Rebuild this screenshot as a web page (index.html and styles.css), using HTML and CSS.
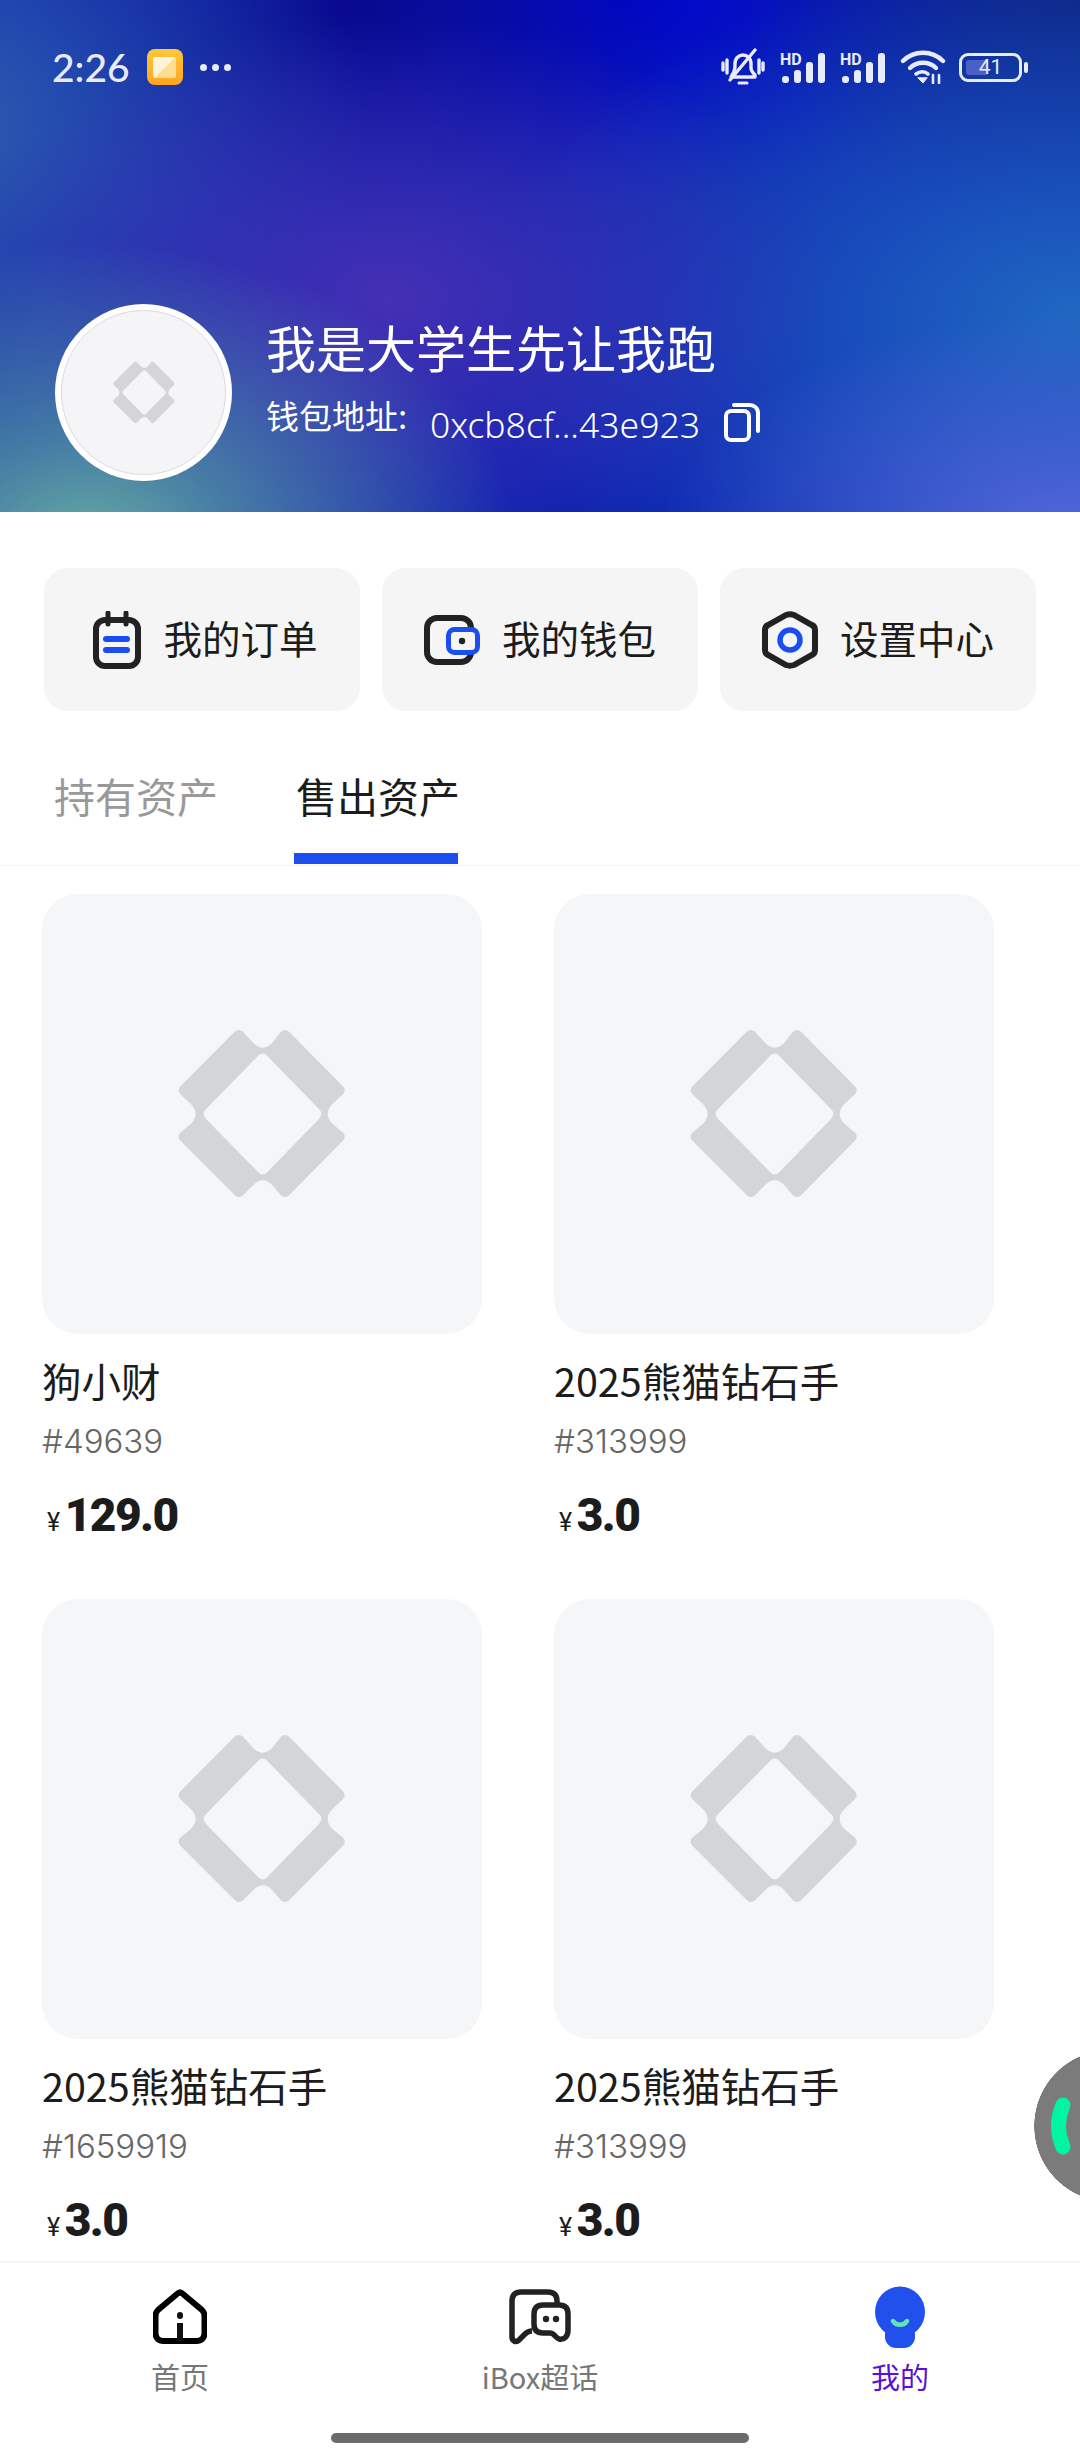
FILE: index.html
```html
<!DOCTYPE html>
<html lang="zh-CN">
<head>
    <meta charset="UTF-8">
    <meta name="viewport" content="width=device-width, initial-scale=1.0">
    <title>我的</title>
    <link rel="stylesheet" href="styles.css">
</head>
<body>
    <svg class="defs" width="0" height="0">
        <symbol id="logoMark" viewBox="80 80 512 520">
            <path fill-rule="evenodd" d="M255 97Q268 87 280 97L308 128Q338 160 368 128L392 97Q404 87 416 97L575 258Q586 270 575 282L545 310Q515 340 545 370L575 395Q586 407 575 419L416 580Q404 590 392 580L368 552Q338 520 308 552L280 580Q268 590 256 580L95 419Q84 407 95 395L125 370Q155 340 125 310L95 282Q84 270 95 258ZM325 168Q338 155 351 168L505 326Q518 340 505 354L351 512Q338 525 325 512L170 354Q157 340 170 326Z"/>
        </symbol>
    </svg>

    <header class="hero">
        <div class="statusBar">
            <div class="statusLeft">
                <span class="clock">2:26</span>
                <span class="appIcon"><span class="appIconInner"></span></span>
                <span class="dots"><i></i><i></i><i></i></span>
            </div>
            <div class="statusRight">
                <svg class="bell" width="44" height="38" viewBox="0 0 44 38" fill="none" stroke="#e8ebfa" stroke-width="3.4" stroke-linecap="round" stroke-linejoin="round">
                    <path d="M11 27c3-3 3-6 3-11 0-6 4-9 8-9s8 3 8 9v4c0 3 2 5 4 7v2H10"/>
                    <path d="M34 2 9 32"/>
                    <path d="M2 15v7M6 12v13M38 12v13M42 15v7"/>
                    <path d="M18 35h8" stroke-width="3"/>
                </svg>
                <svg class="signal" width="50" height="36" viewBox="0 0 50 36" fill="#e8ebfa">
                    <text x="0" y="16" class="hdText">HD</text>
                    <rect x="2" y="27" width="7" height="7" rx="3"/>
                    <rect x="14" y="21" width="7" height="13" rx="3"/>
                    <rect x="26" y="13" width="7" height="21" rx="3"/>
                    <rect x="38" y="4" width="7" height="30" rx="3"/>
                </svg>
                <svg class="signal" width="50" height="36" viewBox="0 0 50 36" fill="#e8ebfa">
                    <text x="0" y="16" class="hdText">HD</text>
                    <rect x="2" y="27" width="7" height="7" rx="3"/>
                    <rect x="14" y="21" width="7" height="13" rx="3"/>
                    <rect x="26" y="13" width="7" height="21" rx="3"/>
                    <rect x="38" y="4" width="7" height="30" rx="3"/>
                </svg>
                <svg width="46" height="34" viewBox="0 0 46 34" fill="none" stroke="#e8ebfa" stroke-width="4.4" stroke-linecap="round">
                    <path d="M3 11C14 0 32 0 43 11"/>
                    <path d="M10 18c7-7 19-7 26 0"/>
                    <path d="M16 24c4-3 9-3 12 0" stroke-width="3.6"/>
                    <path d="m18 28 5 5 4-5z" fill="#e8ebfa" stroke-width="1"/>
                    <path d="M33 25v8M39 25v8" stroke-width="2.6"/>
                </svg>
                <div class="battery">
                    <div class="batteryBody">
                        <div class="batteryFill"></div>
                        <span class="batteryText">41</span>
                    </div>
                    <div class="batteryNub"></div>
                </div>
            </div>
        </div>

        <div class="profile">
            <div class="avatar">
                <div class="avatarInner">
                    <svg class="avatarLogo"><use href="#logoMark"/></svg>
                </div>
            </div>
            <div class="profileInfo">
                <div class="userName">我是大学生先让我跑</div>
                <div class="walletRow">
                    <span class="walletLabel">钱包地址:</span>
                    <span class="walletAddress">0xcb8cf...43e923</span>
                    <svg class="copyIcon" width="36" height="40" viewBox="0 0 36 40" fill="none" stroke="#fff" stroke-width="4" stroke-linejoin="round" stroke-linecap="round">
                        <rect x="2" y="9" width="23" height="29" rx="5"/>
                        <path d="M10 3h16c4 0 8 3 8 8v18"/>
                    </svg>
                </div>
            </div>
        </div>
    </header>

    <nav class="shortcuts">
        <div class="shortcut">
            <svg width="48" height="58" viewBox="0 0 48 58" fill="none">
                <rect x="3" y="9" width="42" height="46" rx="9" stroke="#222" stroke-width="6"/>
                <path d="M15 2v11M33 2v11" stroke="#222" stroke-width="5" stroke-linecap="round"/>
                <rect x="10" y="25" width="27" height="6" rx="3" fill="#1b4ef0"/>
                <rect x="10" y="36" width="27" height="6" rx="3" fill="#1b4ef0"/>
            </svg>
            <span>我的订单</span>
        </div>
        <div class="shortcut">
            <svg width="56" height="50" viewBox="0 0 56 50" fill="none">
                <rect x="3" y="3" width="44" height="44" rx="10" stroke="#222" stroke-width="6"/>
                <rect x="24.500" y="14.500" width="29" height="23" rx="6" fill="#f5f5f5" stroke="#1b4ef0" stroke-width="5"/>
                <circle cx="38" cy="26" r="3.200" fill="#222"/>
            </svg>
            <span>我的钱包</span>
        </div>
        <div class="shortcut">
            <svg width="56" height="58" viewBox="0 0 56 58" fill="none">
                <path d="M24 4 6 14c-2 1-3 3-3 5v20c0 2 1 4 3 5l18 10c3 1 5 1 8 0l18-10c2-1 3-3 3-5V19c0-2-1-4-3-5L32 4c-3-1-5-1-8 0Z" stroke="#222" stroke-width="6"/>
                <circle cx="28" cy="29" r="10" stroke="#1b4ef0" stroke-width="5.500"/>
            </svg>
            <span>设置中心</span>
        </div>
    </nav>

    <div class="tabs">
        <div class="tab">持有资产</div>
        <div class="tab active">售出资产</div>
    </div>

    <main class="assetGrid">
        <div class="assetCard">
            <div class="assetImage"><svg class="assetLogo"><use href="#logoMark"/></svg></div>
            <div class="assetName">狗小财</div>
            <div class="assetId">#49639</div>
            <div class="assetPrice"><span class="yen">¥</span>129.0</div>
        </div>
        <div class="assetCard">
            <div class="assetImage"><svg class="assetLogo"><use href="#logoMark"/></svg></div>
            <div class="assetName">2025熊猫钻石手</div>
            <div class="assetId">#313999</div>
            <div class="assetPrice"><span class="yen">¥</span>3.0</div>
        </div>
        <div class="assetCard">
            <div class="assetImage"><svg class="assetLogo"><use href="#logoMark"/></svg></div>
            <div class="assetName">2025熊猫钻石手</div>
            <div class="assetId">#1659919</div>
            <div class="assetPrice"><span class="yen">¥</span>3.0</div>
        </div>
        <div class="assetCard">
            <div class="assetImage"><svg class="assetLogo"><use href="#logoMark"/></svg></div>
            <div class="assetName">2025熊猫钻石手</div>
            <div class="assetId">#313999</div>
            <div class="assetPrice"><span class="yen">¥</span>3.0</div>
        </div>
    </main>

    <div class="floatBtn">
        <svg width="46" height="152" viewBox="0 0 46 152" fill="none">
            <path d="M29 55Q20 76 29 97" stroke="#00f5a0" stroke-width="15" stroke-linecap="round"/>
        </svg>
    </div>

    <footer class="tabBar">
        <div class="barItem">
            <svg width="54" height="62" viewBox="0 0 54 54" fill="none">
                <path d="M24 4 5 20c-2 2-2.500 3-2.500 6v17c0 5 3 8 8 8h33c5 0 8-3 8-8V26c0-3-.5-4-2.500-6L30 4c-2-2-4-2-6 0Z" stroke="#000" stroke-width="6"/>
                <rect x="24" y="22" width="6" height="7" rx="3" fill="#111"/>
                <rect x="24" y="33" width="6" height="18" fill="#111"/>
            </svg>
            <span>首页</span>
        </div>
        <div class="barItem">
            <svg width="62" height="62" viewBox="0 0 62 56" fill="none" stroke="#222" stroke-width="5.500" stroke-linejoin="round">
                <path d="M48 16V12c0-6-3-9-9-9H12c-6 0-9 3-9 9v36c0 4 4 6 7 3l6-6c2-2 4-3 7-3"/>
                <path d="M34 16h16c6 0 9 3 9 9v16c0 6-3 10-9 9-3-1-5-6-9-6H34c-6 0-9-3-9-9V25c0-6 3-9 9-9Z" fill="#fff"/>
                <circle cx="37" cy="30" r="3.200" fill="#222" stroke="none"/>
                <circle cx="47" cy="30" r="3.200" fill="#222" stroke="none"/>
            </svg>
            <span>iBox超话</span>
        </div>
        <div class="barItem activeItem">
            <svg width="52" height="62" viewBox="0 0 52 62" fill="none">
                <rect x="11" y="38" width="30" height="24" rx="11" fill="#2150ec"/>
                <ellipse cx="26" cy="26" rx="25" ry="25.500" fill="#2150ec"/>
                <path d="M19 35c3 5 11 5 14 0" stroke="#5ee6b4" stroke-width="4.500" stroke-linecap="round"/>
            </svg>
            <span>我的</span>
        </div>
    </footer>
    <div class="homeBar"><div class="homeIndicator"></div></div>
</body>
</html>
```

FILE: styles.css
```css
* {
    box-sizing: border-box;
}

body {
    position: relative;
    display: flex;
    flex-direction: column;
    width: 1080px;
    height: 2460px;
    margin: 0;
    overflow: hidden;
    background-color: white;
    color: #1c1c1c;
    font-family: "Noto Sans CJK SC", "Noto Sans", sans-serif;
}

.defs {
    position: absolute;
}

.hero {
    flex: none;
    height: 512px;
    padding: 46px 52px 0;
    color: white;
    background-color: #0c22b0;
    background-image:
        radial-gradient(ellipse 430px 300px at 8% 106%, #66aba2 0%, rgba(90, 160, 160, 0.7) 35%, rgba(80, 140, 170, 0) 100%),
        radial-gradient(ellipse 420px 220px at 100% 104%, #5468da 0%, rgba(80, 100, 215, 0) 100%),
        radial-gradient(ellipse 440px 280px at 36% 58%, #4430b4 0%, rgba(68, 48, 180, 0) 100%),
        radial-gradient(ellipse 600px 360px at 100% 62%, #2068c2 0%, rgba(31, 106, 196, 0) 100%),
        radial-gradient(ellipse 460px 340px at -8% 25%, #2f60ae 0%, rgba(44, 92, 172, 0) 100%),
        radial-gradient(ellipse 340px 220px at 100% 0%, #0c2384 0%, rgba(12, 35, 132, 0) 100%),
        radial-gradient(ellipse 340px 230px at 32% 2%, #08098e 0%, rgba(8, 9, 142, 0) 100%),
        radial-gradient(ellipse 380px 200px at 58% 0%, #0006cc 0%, rgba(0, 6, 204, 0) 100%);
}

.statusBar {
    display: flex;
    justify-content: space-between;
    align-items: center;
    height: 42px;
}

.statusLeft, .statusRight {
    display: flex;
    align-items: center;
}

.clock {
    margin-right: 17px;
    font-family: Lato, sans-serif;
    font-size: 39px;
    font-weight: 500;
    color: #e8ebfa;
}

.appIcon {
    display: flex;
    justify-content: center;
    align-items: center;
    width: 36px;
    height: 36px;
    margin-right: 17px;
    border-radius: 8px;
    background: linear-gradient(#ffc93a, #ffa51f);
}

.appIconInner {
    width: 23px;
    height: 21px;
    border-radius: 2px;
    background: linear-gradient(135deg, #fff3d8 50%, #ffdd92 50%);
}

.dots {
    display: flex;
    gap: 5px;
}

.dots i {
    width: 7px;
    height: 7px;
    border-radius: 50%;
    background-color: #e8ebfa;
}

.statusRight svg {
    margin-right: 13px;
}

.statusRight .bell {
    margin-right: 15px;
}

.statusRight .signal {
    margin-right: 10px;
}

.hdText {
    font-family: Roboto, sans-serif;
    font-size: 16px;
    font-weight: 700;
}

.battery {
    display: flex;
    align-items: center;
}

.batteryBody {
    position: relative;
    display: flex;
    justify-content: center;
    align-items: center;
    width: 63px;
    height: 29px;
    padding: 3px;
    border: 3px solid #e8ebfa;
    border-radius: 9px;
}

.batteryFill {
    position: absolute;
    left: 4px;
    top: 4px;
    bottom: 4px;
    width: 22px;
    border-radius: 3px;
    background-color: #4a5fc8;
}

.batteryText {
    position: relative;
    font-family: Roboto, sans-serif;
    font-size: 21px;
    color: #e8ebfa;
}

.batteryNub {
    width: 4px;
    height: 11px;
    margin-left: 2px;
    border-radius: 2px;
    background-color: #e8ebfa;
}

.profile {
    display: flex;
    align-items: center;
    gap: 34px;
    margin-top: 216px;
    margin-left: 3px;
}

.avatar {
    flex: none;
    width: 177px;
    height: 177px;
    padding: 6px;
    border-radius: 50%;
    background-color: white;
}

.avatarInner {
    display: flex;
    justify-content: center;
    align-items: center;
    width: 100%;
    height: 100%;
    border: 1px solid #dcdcdc;
    border-radius: 50%;
    background-color: #f5f5f7;
}

.avatarLogo {
    width: 64px;
    height: 65px;
    fill: #d3d5d6;
}

.profileInfo {
    margin-top: -24px;
}

.userName {
    margin-top: -3px;
    font-size: 50px;
    line-height: 70px;
    white-space: nowrap;
}

.walletRow {
    display: flex;
    align-items: center;
    margin-top: 16px;
}

.walletLabel {
    width: 164px;
    font-size: 33px;
    line-height: 44px;
    margin-top: -15px;
}

.walletAddress {
    margin-top: 3px;
    font-family: "Noto Sans", sans-serif;
    font-size: 35.500px;
    font-weight: 300;
}

.copyIcon {
    margin-left: 24px;
}

.shortcuts {
    display: grid;
    grid-template-columns: repeat(3, 316px);
    gap: 22px;
    flex: none;
    padding: 56px 44px 0;
}

.shortcut {
    display: flex;
    justify-content: center;
    align-items: center;
    gap: 22px;
    height: 143px;
    border-radius: 24px;
    background-color: #f5f5f5;
    font-size: 38.500px;
}

.shortcut:first-child svg {
    margin-left: 7px;
}

.shortcut span {
    margin-top: -6px;
}

.tabs {
    display: flex;
    flex: none;
    gap: 78px;
    height: 155px;
    padding-left: 54px;
    border-bottom: 1px solid #f2f2f2;
}

.tab {
    position: relative;
    margin-top: 54px;
    font-size: 41px;
    line-height: 60px;
    color: #999;
}

.tab.active {
    color: #1c1c1c;
}

.tab.active::after {
    content: "";
    position: absolute;
    left: -2px;
    right: 2px;
    top: 88px;
    height: 11px;
    background-color: #1b4ef0;
}

.assetGrid {
    display: grid;
    grid-template-columns: repeat(2, 440px);
    grid-auto-rows: 705px;
    column-gap: 72px;
    flex: 1;
    min-height: 0;
    padding: 28px 42px 0;
    overflow: hidden;
}

.assetImage {
    display: flex;
    justify-content: center;
    align-items: center;
    height: 440px;
    border-radius: 36px;
    background-color: #f5f6f8;
}

.assetLogo {
    width: 174px;
    height: 176px;
    fill: #d3d5d6;
}

.assetName {
    margin-top: 18px;
    font-size: 39.500px;
    line-height: 56px;
}

.assetId {
    margin-top: 10px;
    font-family: Inter, sans-serif;
    font-size: 33px;
    font-weight: 300;
    line-height: 46px;
    color: #666;
}

.assetPrice {
    margin-top: 22px;
    margin-left: 5px;
    font-family: Roboto, sans-serif;
    font-size: 46px;
    font-weight: 900;
    letter-spacing: -1.5px;
    line-height: 58px;
}

.yen {
    margin-right: 6px;
    font-size: 25px;
    font-weight: 400;
}

.floatBtn {
    position: absolute;
    right: 0;
    top: 2050px;
    width: 46px;
    height: 152px;
    background: radial-gradient(circle at 76px 76px, #7b7b7b 75.5px, rgba(123, 123, 123, 0) 76px);
}

.tabBar {
    display: grid;
    grid-template-columns: repeat(3, 1fr);
    flex: none;
    height: 163px;
    padding-top: 21px;
    border-top: 2px solid #f6f6f6;
    background-color: white;
}

.barItem {
    display: flex;
    flex-direction: column;
    justify-content: flex-end;
    align-items: center;
    height: 112px;
    font-size: 29px;
    line-height: 40px;
    color: #777;
}

.barItem svg {
    margin-bottom: 8px;
}

.activeItem {
    color: #5a10d8;
}

.homeBar {
    display: flex;
    flex: none;
    justify-content: center;
    height: 36px;
    background-color: white;
}

.homeIndicator {
    width: 418px;
    height: 10px;
    margin-top: 9px;
    border-radius: 5px;
    background-color: #6b6b6b;
}
```
